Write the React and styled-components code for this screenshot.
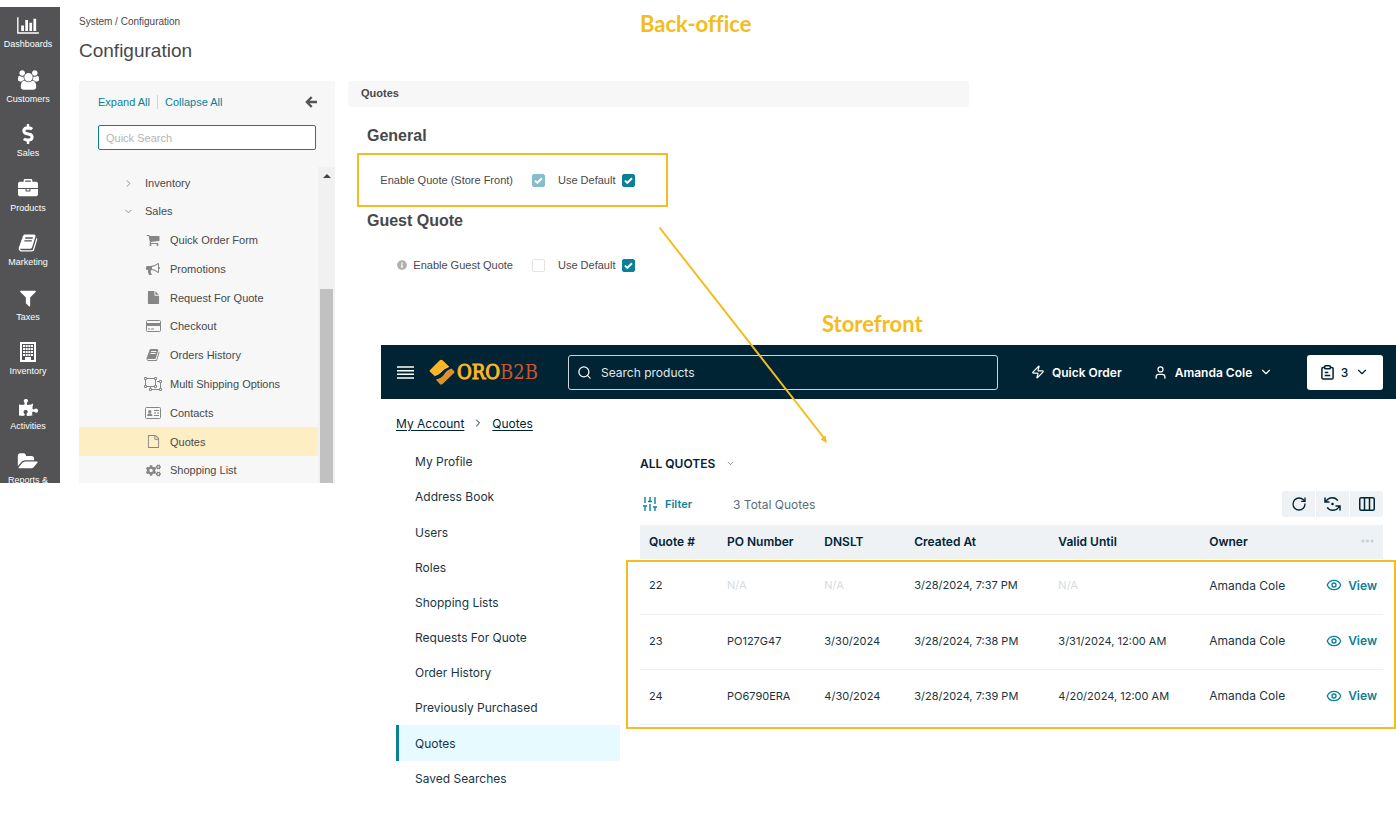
import React from 'react';
import styled, { createGlobalStyle } from 'styled-components';
import { FaDollarSign, FaPuzzlePiece, FaCogs, FaInfoCircle } from 'react-icons/fa';
import { Zap, User, ChevronDown, ChevronRight, Search, RotateCw, Eye } from 'lucide-react';

const admin = `'Liberation Sans', Arial, sans-serif`;
const store = `Inter, 'Open Sans', sans-serif`;
const amber = '#f4bc20';
const teal = '#0c7f99';
const navy = '#002434';

const GlobalStyle = createGlobalStyle`
  * { box-sizing: border-box; }
  body { margin: 0; background: #fff; font-family: ${admin}; font-size: 11px; color: #48484a; }
  button, input { font: inherit; color: inherit; }
  button { border: 0; padding: 0; background: none; cursor: pointer; }
  ul, ol { list-style: none; margin: 0; padding: 0; }
  h1, h2, h3, p { margin: 0; }
  a { color: inherit; text-decoration: none; }
  svg { display: block; flex: none; }
`;

const Page = styled.div`
  position: relative;
  display: flex;
  align-items: flex-start;
  min-height: 100vh;
`;

/* ---------- back-office navigation ---------- */
const Rail = styled.nav`
  width: 60px;
  flex: none;
  height: 476px;
  margin-top: 7px;
  padding-right: 4px;
  overflow: hidden;
  background: #535355;
`;
const RailLink = styled.a`
  display: flex;
  flex-direction: column;
  align-items: center;
  height: 55px;
  padding-top: 6px;
  color: #fff;
  font-size: 9px;
  line-height: 14px;
  white-space: nowrap;
  &:nth-child(even) { height: 54px; }
`;
const RailIcon = styled.span`
  display: flex;
  align-items: center;
  justify-content: center;
  height: 24px;
`;

const TreeColumn = styled.section`
  width: 256px;
  flex: none;
  margin-left: 19px;
`;
const Crumbs = styled.p`
  padding-top: 16px;
  font-size: 10px;
  line-height: 12px;
`;
const PageTitle = styled.h1`
  margin-top: 10px;
  font-size: 19px;
  line-height: 25px;
  font-weight: 400;
`;
const TreePanel = styled.div`
  height: 402px;
  margin-top: 18px;
  overflow: hidden;
  border-radius: 3px 3px 0 0;
  background: #f7f7f7;
`;
const TreeTools = styled.div`
  display: flex;
  align-items: center;
  padding: 14px 18px 0 19px;
  height: 28px;
`;
const TreeTool = styled.button`
  color: ${teal};
  line-height: 14px;
  & + & {
    margin-left: 7px;
    padding-left: 7px;
    border-left: 1px solid #d4d4d4;
  }
`;
const CollapseButton = styled.button`
  margin-left: auto;
  color: #555;
`;
const QuickSearch = styled.input`
  display: block;
  width: calc(100% - 38px);
  height: 25px;
  margin: 16px 19px 0;
  padding: 0 7px;
  border: 1px solid ${teal};
  border-radius: 2px;
  outline: 0;
  background: #fff;
  &::placeholder { color: #b5b5b5; opacity: 1; }
`;
const TreeScroll = styled.div`
  display: flex;
  height: 316px;
  margin-top: 17px;
`;
const TreeList = styled.ul`
  flex: 1;
  padding-top: 2px;
`;
const TreeLink = styled.a`
  display: flex;
  align-items: center;
  height: ${p => (p.$branch ? '28px' : '29px')};
  padding-left: ${p => (p.$branch ? '42px' : '64px')};
  background: ${p => (p.$active ? '#feeec4' : 'transparent')};
  li:nth-child(5n + 1) > & { height: 28px; }
`;
const TreeIcon = styled.span`
  display: flex;
  justify-content: center;
  width: ${p => (p.$branch ? '15px' : '20px')};
  margin-right: ${p => (p.$branch ? '9px' : '7px')};
  color: #868686;
`;
const ScrollTrack = styled.div`
  display: flex;
  flex-direction: column;
  align-items: center;
  width: 17px;
  background: #f1f1f1;
`;
const ScrollArrow = styled.span`
  margin: 7px 0 111px;
  border: 4px solid transparent;
  border-top: 0;
  border-bottom-color: #444;
`;
const ScrollThumb = styled.span`
  flex: 1;
  width: 13px;
  background: #c1c1c1;
`;

/* ---------- main column ---------- */
const Main = styled.main`
  flex: 1;
  min-width: 0;
  margin-left: 13px;
`;
const Caption = styled.h2`
  padding-top: ${p => p.$top};
  padding-left: ${p => p.$indent};
  color: ${amber};
  font: 700 22px/28px Lato, sans-serif;
  font-variant-ligatures: none;
`;
const Settings = styled.section`
  margin-top: 43px;
  height: 203px;
`;
const SettingsTab = styled.h3`
  width: 59.25%;
  height: 26px;
  padding-left: 13px;
  border-radius: 3px;
  background: #f7f7f7;
  font-size: 11px;
  line-height: 25px;
`;
const SettingsHeading = styled.h3`
  padding-left: 19px;
  margin-top: ${p => (p.$first ? '17px' : '2px')};
  font-size: 16px;
  line-height: 24px;
`;
const SettingRow = styled.div`
  display: flex;
  align-items: center;
  width: 311px;
  height: 54px;
  margin: 5px 0 0 9px;
  border: 2px solid ${p => (p.$marked ? amber : 'transparent')};
`;
const SettingLabel = styled.label`
  display: flex;
  align-items: center;
  justify-content: flex-end;
  gap: 6px;
  width: 154px;
  margin-right: 19px;
  line-height: 14px;
  svg { color: #b0b0b0; }
`;
const Tick = styled.input`
  appearance: none;
  flex: none;
  width: 13px;
  height: 13px;
  margin: 0;
  border: 1px solid #e3e3e3;
  border-radius: 2px;
  background: #fff center / 9px 9px no-repeat;
  &:checked {
    border-color: ${teal};
    background-color: ${teal};
    background-image: url("data:image/svg+xml,%3Csvg xmlns='http://www.w3.org/2000/svg' viewBox='0 0 9 9'%3E%3Cpath d='M1 4.6l2.3 2.3L8 2.2' fill='none' stroke='white' stroke-width='2'/%3E%3C/svg%3E");
  }
  &:disabled:checked { opacity: .5; }
`;
const DefaultLabel = styled.label`
  display: flex;
  align-items: center;
  gap: 7px;
  margin-left: 13px;
`;

/* ---------- storefront ---------- */
const Store = styled.section`
  margin: 7px 0 0 33px;
  font-family: ${store};
  font-size: 11px;
  color: ${navy};
`;
const StoreHeader = styled.header`
  display: flex;
  align-items: center;
  height: 54px;
  padding: 0 13px 0 16px;
  background: ${navy};
  color: #fff;
`;
const Logo = styled.a`
  display: flex;
  align-items: center;
  gap: 2px;
  width: 112px;
  margin: 0 27px 0 15px;
  color: #fdb725;
  font: 400 20px/24px 'DejaVu Serif Condensed', 'DejaVu Serif', serif;
  white-space: nowrap;
`;
const LogoHead = styled.span`
  -webkit-text-stroke: 1px currentColor;
`;
const LogoTail = styled.span`
  color: #c9572b;
`;
const SearchBox = styled.label`
  display: flex;
  align-items: center;
  flex: 0 1 430px;
  height: 35px;
  padding: 0 8px;
  gap: 9px;
  border: 1px solid #cdd7db;
  border-radius: 3px;
  input {
    flex: 1;
    min-width: 0;
    padding: 0;
    border: 0;
    outline: 0;
    background: none;
    font-size: 12px;
    &::placeholder { color: #e2e8ea; opacity: 1; }
  }
`;
const HeaderButton = styled.button`
  display: flex;
  align-items: center;
  gap: 7px;
  margin-left: ${p => p.$gap};
  font-size: 12px;
  font-weight: 600;
  white-space: nowrap;
`;
const ListButton = styled(HeaderButton)`
  justify-content: center;
  margin-left: auto;
  width: 76px;
  height: 35px;
  border-radius: 3px;
  background: #fff;
  color: ${navy};
  font-weight: 500;
`;
const StoreCrumbs = styled.nav`
  display: flex;
  align-items: center;
  gap: 8px;
  height: 48px;
  padding-left: 15px;
  font-size: 12px;
  a { text-decoration: underline; text-underline-offset: 2px; }
`;
const StoreBody = styled.div`
  display: flex;
  align-items: flex-start;
`;
const AccountMenu = styled.ul`
  flex: none;
  width: 224px;
  margin: -3px 20px 0 15px;
  font-size: 12px;
  color: #1b3442;
`;
const AccountLink = styled.a`
  display: flex;
  align-items: center;
  height: ${p => (p.$active ? '36px' : '35px')};
  padding-left: 16px;
  border-left: 3px solid ${p => (p.$active ? teal : 'transparent')};
  background: ${p => (p.$active ? '#e6faff' : 'transparent')};
  li:nth-child(3) > & { height: 36px; }
`;
const Quotes = styled.div`
  flex: 1;
  min-width: 0;
  padding: 6px 13px 0 0;
`;
const ViewSwitch = styled.button`
  display: flex;
  align-items: center;
  gap: 11px;
  height: 20px;
  font-size: 12px;
  font-weight: 600;
  svg { color: #667; }
`;
const GridBar = styled.div`
  display: flex;
  align-items: center;
  height: 26px;
  margin: 18px 0 8px;
`;
const FilterButton = styled.button`
  display: flex;
  align-items: center;
  gap: 8px;
  margin: 0 41px 0 3px;
  color: ${teal};
  font-weight: 600;
`;
const Total = styled.span`
  color: #5b6d78;
  font-size: 12px;
`;
const Tools = styled.div`
  display: flex;
  gap: 1px;
  margin-left: auto;
  overflow: hidden;
  border-radius: 3px;
`;
const Tool = styled.button`
  display: flex;
  align-items: center;
  justify-content: center;
  width: 33px;
  height: 26px;
  background: #eef2f5;
`;
const TableFrame = styled.div`
  position: relative;
`;
const Table = styled.table`
  width: 100%;
  table-layout: fixed;
  border-collapse: collapse;
  th, td { padding: 0 0 2px 9px; text-align: left; white-space: nowrap; }
  th { height: 34px; background: #eef2f5; font-size: 12px; font-weight: 600; }
  td { height: 55px; border-bottom: 1px solid #edf0f2; color: #1b3442; }
  td:nth-child(6), td:nth-child(7) { font-size: 12px; }
  tr > :last-child { padding-left: 0; }
  th:last-child { padding-right: 9px; color: #c6ced3; }
  th:last-child svg { margin-left: auto; }
`;
const Muted = styled.span`
  color: #d5dce0;
`;
const ViewLink = styled.a`
  display: flex;
  align-items: center;
  justify-content: flex-end;
  gap: 6px;
  padding-right: 6px;
  color: ${teal};
  font-weight: 600;
`;
const Marker = styled.div`
  position: absolute;
  inset: 35px -13px -4px -14px;
  border: 2px solid ${amber};
  pointer-events: none;
`;
const Arrow = styled.svg`
  position: absolute;
  left: 658px;
  top: 226px;
  pointer-events: none;
`;

/* ---------- drawings ---------- */
const Glyph = ({ d, w = 1792, h = 1792, size = 22 }) => (
  <svg width={Math.round(size * w / h)} height={size} viewBox={`0 0 ${w} ${h}`} fill="currentColor" aria-hidden="true"><path d={d} /></svg>
);
const bars = 'M640 896v512h-256v-512h256zm384-512v1024h-256v-1024h256zm1024 1152v128h-2048v-1536h128v1408h1920zm-640-896v768h-256v-768h256zm384-384v1152h-256v-1152h256z';
const group = 'M593 896q-162 5-265 128h-134q-82 0-138-40.5t-56-118.5q0-353 124-353 6 0 43.5 21t97.5 42.5 119 21.5q67 0 133-23-5 37-5 66 0 139 81 256zm1071 637q0 120-73 189.5t-194 69.5h-874q-121 0-194-69.5t-73-189.5q0-53 3.5-103.5t14-109 26.5-108.5 43-97.5 62-81 85.5-53.5 111.5-20q10 0 43 21.5t73 48 107 48 135 21.5 135-21.5 107-48 73-48 43-21.5q61 0 111.5 20t85.5 53.5 62 81 43 97.5 26.5 108.5 14 109 3.5 103.5zm-1024-1277q0 106-75 181t-181 75-181-75-75-181 75-181 181-75 181 75 75 181zm704 384q0 159-112.5 271.5t-271.5 112.5-271.5-112.5-112.5-271.5 112.5-271.5 271.5-112.5 271.5 112.5 112.5 271.5zm576 225q0 78-56 118.5t-138 40.5h-134q-103-123-265-128 81-117 81-256 0-29-5-66 66 23 133 23 59 0 119-21.5t97.5-42.5 43.5-21q124 0 124 353zm-128-609q0 106-75 181t-181 75-181-75-75-181 75-181 181-75 181 75 75 181z';
const briefcase = 'M640 256h512v-128h-512v128zm1152 640v480q0 66-47 113t-113 47h-1472q-66 0-113-47t-47-113v-480h672v160q0 26 19 45t45 19h320q26 0 45-19t19-45v-160h672zm-768 0v128h-256v-128h256zm768-480v384h-1792v-384q0-66 47-113t113-47h352v-160q0-40 28-68t68-28h576q40 0 68 28t28 68v160h352q66 0 113 47t47 113z';
const book = 'M1703 478q40 57 18 129l-275 906q-19 64-76.5 107.5t-122.5 43.5h-923q-77 0-148.5-53.5t-99.5-131.5q-24-67-2-127 0-4 3-27t4-37q1-8-3-21.5t-3-19.5q2-11 8-21t16.5-23.5 16.5-23.5q23-38 45-91.5t30-91.5q3-10 .5-30t-.5-28q3-11 17-28t17-23q21-36 42-92t25-90q1-9-2.5-32t.5-28q4-13 22-30.5t22-22.5q19-26 42.5-84.5t27.5-96.5q1-8-3-25.5t-2-26.5q2-8 9-18t18-23 17-21q8-12 16.5-30.5t15-35 16-36 19.5-32 26.5-23.5 36-11.5 47.5 5.5l-1 3q38-9 51-9h761q74 0 114 56t18 130l-274 906q-36 119-71.5 153.5t-128.5 34.5h-869q-27 0-38 15-11 16-1 43 24 70 144 70h923q29 0 56-15.5t35-41.5l300-987q7-22 5-57 38 15 59 43zm-1064 2q-4 13 2 22.5t20 9.5h608q13 0 25.5-9.5t16.5-22.5l21-64q4-13-2-22.5t-20-9.5h-608q-13 0-25.5 9.5t-16.5 22.5zm-83 256q-4 13 2 22.5t20 9.5h608q13 0 25.5-9.5t16.5-22.5l21-64q4-13-2-22.5t-20-9.5h-608q-13 0-25.5 9.5t-16.5 22.5z';
const funnel = 'M1595 295q17 41-14 70l-493 493v742q0 42-39 59-13 5-25 5-27 0-45-19l-256-256q-19-19-19-45v-486l-493-493q-31-29-14-70 17-39 59-39h1280q42 0 59 39z';
const folder = 'M1943 952q0 31-31 66l-336 396q-43 51-120.5 86.5t-143.5 35.5h-1088q-34 0-60.5-13t-26.5-43q0-31 31-66l336-396q43-51 120.5-86.5t143.5-35.5h1088q34 0 60.5 13t26.5 43zm-343-344v160h-832q-94 0-197 47.5t-164 119.5l-337 396-5 6q0-4-.5-12.5t-.5-12.5v-960q0-92 66-158t158-66h320q92 0 158 66t66 158v32h544q92 0 158 66t66 158z';
const cart = 'M704 1536q0 52-38 90t-90 38-90-38-38-90 38-90 90-38 90 38 38 90zm896 0q0 52-38 90t-90 38-90-38-38-90 38-90 90-38 90 38 38 90zm128-1088v512q0 24-16.5 42.5t-40.5 21.5l-1044 122q13 60 13 70 0 16-24 64h920q26 0 45 19t19 45-19 45-45 19h-1024q-26 0-45-19t-19-45q0-11 8-31.5t16-36 21.5-40 15.5-29.5l-177-823h-204q-26 0-45-19t-19-45 19-45 45-19h256q16 0 28.5 6.5t19.5 15.5 13 24.5 8 26 5.5 29.5 4.5 26h1201q26 0 45 19t19 45z';
const horn = 'M1664 640q53 0 90.5 37.5t37.5 90.5-37.5 90.5-90.5 37.5v384q0 52-38 90t-90 38q-417-347-812-380-58 19-91 66t-31 100.5 40 92.5q-20 33-23 65.5t6 58 33.5 55 48 50 61.5 50.5q-29 58-111.5 83t-168.5 11.5-132-55.5q-7-23-29.5-87.5t-32-94.5-23-89-15-101 3.5-98.5 22-110.5h-122q-66 0-113-47t-47-113v-192q0-66 47-113t113-47h480q435 0 896-384 52 0 90 38t38 90v384zm-128 604v-954q-394 302-768 343v270q377 42 768 341z';
const file = 'M1152 512v-472q22 14 36 28l408 408q14 14 28 36h-472zm-128 32q0 40 28 68t68 28h544v1056q0 40-28 68t-68 28h-1344q-40 0-68-28t-28-68v-1600q0-40 28-68t68-28h800v544z';
const fileOutline = 'M1596 380q28 28 48 76t20 88v1152q0 40-28 68t-68 28h-1344q-40 0-68-28t-28-68v-1600q0-40 28-68t68-28h896q40 0 88 20t76 48zm-444-244v376h376q-10-29-22-41l-313-313q-12-12-41-22zm384 1528v-1024h-416q-40 0-68-28t-28-68v-416h-768v1536h1280z';

const BackIcon = () => (
  <svg width="12" height="12" viewBox="0 0 12 12" fill="none" stroke="currentColor" strokeWidth="2.400" aria-hidden="true">
    <path d="M6.700 1L1.900 6l4.800 5M2.200 6H12" />
  </svg>
);
const BuildingIcon = () => (
  <svg width="16" height="20" viewBox="0 0 16 20" aria-hidden="true">
    <path d="M0 0h16v20H0z" fill="#fff" />
    <path d="M2 2h12v16h-3v-3H5v3H2z" fill="#535355" />
    <path d="M3 4h10M3 7h10M3 10h10M3 13h10" stroke="#fff" strokeWidth="2" strokeDasharray="2 .67" />
  </svg>
);
const CardIcon = () => (
  <svg width="15" height="12" viewBox="0 0 15 12" aria-hidden="true">
    <rect x=".5" y=".5" width="14" height="11" rx="1" fill="none" stroke="#868686" />
    <path d="M1 3h13v3H1zM2 8.500h2v1H2zM5 8.500h3v1H5z" fill="#868686" />
  </svg>
);
const ContactIcon = () => (
  <svg width="16" height="12" viewBox="0 0 16 12" fill="#868686" aria-hidden="true">
    <rect x=".5" y=".5" width="15" height="11" rx="1" fill="none" stroke="#868686" />
    <circle cx="4.800" cy="4.600" r="1.600" />
    <path d="M2.200 9c0-2 1-2.800 2.600-2.800S7.400 7 7.400 9zM9 3h5v1H9zM9 5.500h2v1H9zM12 5.500h2v1h-2zM9 8h5v1H9z" />
  </svg>
);
const UngroupIcon = () => (
  <svg width="18" height="14" viewBox="0 0 18 14" fill="none" stroke="#868686" aria-hidden="true">
    <path d="M3 1.500h7M1.500 3v5M3 9.500h7M11.500 3v5M13 4.500h2M16.500 6v5M8 12.500h7M6.500 10v1" />
    <path d="M.5.5h2v2h-2zM10.500.5h2v2h-2zM.5 8.500h2v2h-2zM10.500 8.500h2v2h-2zM15.500 3.500h2v2h-2zM15.500 11.500h2v2h-2zM5.500 11.500h2v2h-2z" />
  </svg>
);
const LogoMark = () => (
  <svg width="26" height="26" viewBox="0 0 26 26" aria-hidden="true">
    <path d="M10.800 1.300Q12.200 0 13.600 1.300L20 7.500Q15 9.500 12.500 12.500Q10 15.500 5.300 16.800L1 12.800Q0 12 1 11z" fill="#fdb725" />
    <path d="M20 7.500Q15 9.500 12.500 12.500Q10 15.500 5.300 16.800" fill="none" stroke="#ffe29a" strokeWidth=".8" />
    <path d="M22.500 9.500L25 12Q26 13 25 14L13.600 25Q12.200 26 10.800 25L6.800 20.500Q12.500 19.500 15 15.500Q17.500 11 22.500 9.500z" fill="#dd9229" />
  </svg>
);
const MenuIcon = () => (
  <svg width="17" height="13" viewBox="0 0 17 13" aria-hidden="true">
    <path d="M0 1h17M0 4.670h17M0 8.330h17M0 12h17" stroke="#fff" strokeWidth="1.500" />
  </svg>
);
const ClipboardIcon = () => (
  <svg width="13" height="15" viewBox="0 0 13 15" fill="none" stroke="currentColor" strokeWidth="1.500" strokeLinejoin="round" aria-hidden="true">
    <path d="M3.500 2.500H2.200Q.9 2.500.9 3.800v9Q.9 14.100 2.200 14.100h8.600q1.300 0 1.300-1.300v-9q0-1.300-1.300-1.300H9.500" />
    <rect x="3.700" y=".8" width="5.600" height="3" rx=".8" />
    <path d="M3.700 7.500h3.600M3.700 10.500h5.600" />
  </svg>
);
const SlidersIcon = () => (
  <svg width="14" height="14" viewBox="0 0 14 14" fill="none" stroke="currentColor" strokeWidth="1.400" aria-hidden="true">
    <path d="M2 0v6M2 9v5M0 9h4M7 0v4M7 7v7M5 4.500h4M12 0v7M12 10v4M10 10h4" />
  </svg>
);
const ResetIcon = () => (
  <svg width="17" height="16" viewBox="0 0 17 16" fill="none" stroke="currentColor" strokeWidth="1.500" aria-hidden="true">
    <path d="M1 1.500v4.500h4.500M1.500 6C3 3 5.500 1.700 8.500 1.700c2.300 0 4 1 5.300 3M16 14.500V10h-4.500M15.500 10c-1.500 3-4 4.300-7 4.300-2.300 0-4-1-5.300-3" />
    <circle cx="8.500" cy="8" r="1.300" fill="currentColor" stroke="none" />
  </svg>
);
const ColumnsIcon = () => (
  <svg width="16" height="14" viewBox="0 0 16 14" fill="none" stroke="currentColor" strokeWidth="1.500" aria-hidden="true">
    <rect x=".75" y=".75" width="14.500" height="12.500" rx="1.500" />
    <path d="M5.500 1v12M10.500 1v12" />
  </svg>
);
const DotsIcon = () => (
  <svg width="13" height="4" viewBox="0 0 13 4" fill="currentColor" aria-hidden="true">
    <circle cx="2" cy="2" r="1.500" /><circle cx="6.500" cy="2" r="1.500" /><circle cx="11" cy="2" r="1.500" />
  </svg>
);

/* ---------- data ---------- */
const railItems = [
  ['Dashboards', <Glyph d={bars} w={2048} size={19} />],
  ['Customers', <Glyph d={group} w={1920} size={20} />],
  ['Sales', <FaDollarSign size={20} />],
  ['Products', <Glyph d={briefcase} size={20} />],
  ['Marketing', <Glyph d={book} size={20} />],
  ['Taxes', <Glyph d={funnel} size={20} />],
  ['Inventory', <BuildingIcon />],
  ['Activities', <FaPuzzlePiece size={19} />],
  ['Reports &', <Glyph d={folder} w={2048} size={19} />],
];
const treeItems = [
  ['Quick Order Form', <Glyph d={cart} size={14} />],
  ['Promotions', <Glyph d={horn} size={14} />],
  ['Request For Quote', <Glyph d={file} size={13} />],
  ['Checkout', <CardIcon />],
  ['Orders History', <Glyph d={book} size={14} />],
  ['Multi Shipping Options', <UngroupIcon />],
  ['Contacts', <ContactIcon />],
  ['Quotes', <Glyph d={fileOutline} size={13} />],
  ['Shopping List', <FaCogs size={15} />],
];
const accountItems = ['My Profile', 'Address Book', 'Users', 'Roles', 'Shopping Lists', 'Requests For Quote', 'Order History', 'Previously Purchased', 'Quotes', 'Saved Searches'];
const columns = [['Quote #', '10.5%'], ['PO Number', '13.1%'], ['DNSLT', '12.1%'], ['Created At', '19.4%'], ['Valid Until', '20.3%'], ['Owner', '15%']];
const quotes = [
  ['22', null, null, '3/28/2024, 7:37 PM', null, 'Amanda Cole'],
  ['23', 'PO127G47', '3/30/2024', '3/28/2024, 7:38 PM', '3/31/2024, 12:00 AM', 'Amanda Cole'],
  ['24', 'PO6790ERA', '4/30/2024', '3/28/2024, 7:39 PM', '4/20/2024, 12:00 AM', 'Amanda Cole'],
];

const Setting = ({ id, label, marked, info, ...tick }) => (
  <SettingRow $marked={marked}>
    <SettingLabel htmlFor={id}>{info && <FaInfoCircle size={10} />}{label}</SettingLabel>
    <Tick id={id} type="checkbox" disabled {...tick} />
    <DefaultLabel>Use Default <Tick type="checkbox" defaultChecked /></DefaultLabel>
  </SettingRow>
);

export default function App() {
  return (
    <Page>
      <GlobalStyle />
      <Rail aria-label="Main menu">
        {railItems.map(([name, icon]) => (
          <RailLink href="#" key={name}><RailIcon>{icon}</RailIcon>{name}</RailLink>
        ))}
      </Rail>

      <TreeColumn>
        <Crumbs>System / Configuration</Crumbs>
        <PageTitle>Configuration</PageTitle>
        <TreePanel>
          <TreeTools>
            <TreeTool>Expand All</TreeTool>
            <TreeTool>Collapse All</TreeTool>
            <CollapseButton aria-label="Collapse panel"><BackIcon /></CollapseButton>
          </TreeTools>
          <QuickSearch placeholder="Quick Search" aria-label="Quick Search" autoFocus />
          <TreeScroll>
            <TreeList>
              <li><TreeLink href="#" $branch><TreeIcon $branch><ChevronRight size={11} /></TreeIcon>Inventory</TreeLink></li>
              <li><TreeLink href="#" $branch><TreeIcon $branch><ChevronDown size={11} /></TreeIcon>Sales</TreeLink></li>
              {treeItems.map(([name, icon]) => (
                <li key={name}><TreeLink href="#" $active={name === 'Quotes'}><TreeIcon>{icon}</TreeIcon>{name}</TreeLink></li>
              ))}
            </TreeList>
            <ScrollTrack><ScrollArrow /><ScrollThumb /></ScrollTrack>
          </TreeScroll>
        </TreePanel>
      </TreeColumn>

      <Main>
        <Caption $top="10px" $indent="292px">Back-office</Caption>
        <Settings>
          <SettingsTab>Quotes</SettingsTab>
          <SettingsHeading $first>General</SettingsHeading>
          <Setting id="quote" label="Enable Quote (Store Front)" marked defaultChecked />
          <SettingsHeading>Guest Quote</SettingsHeading>
          <Setting id="guest" label="Enable Guest Quote" info />
        </Settings>
        <Caption $top="26px" $indent="474px">Storefront</Caption>

        <Store>
          <StoreHeader>
            <HeaderButton aria-label="Menu"><MenuIcon /></HeaderButton>
            <Logo href="#"><LogoMark /><span><LogoHead>ORO</LogoHead><LogoTail>B2B</LogoTail></span></Logo>
            <SearchBox>
              <Search size={15} strokeWidth={2} />
              <input type="search" placeholder="Search products" aria-label="Search products" />
            </SearchBox>
            <HeaderButton $gap="33px"><Zap size={14} />Quick Order</HeaderButton>
            <HeaderButton $gap="31px"><User size={15} />Amanda Cole<ChevronDown size={14} /></HeaderButton>
            <ListButton><ClipboardIcon />3<ChevronDown size={14} /></ListButton>
          </StoreHeader>
          <StoreCrumbs aria-label="Breadcrumb">
            <a href="#">My Account</a><ChevronRight size={12} /><a href="#">Quotes</a>
          </StoreCrumbs>
          <StoreBody>
            <AccountMenu>
              {accountItems.map(name => (
                <li key={name}><AccountLink href="#" $active={name === 'Quotes'}>{name}</AccountLink></li>
              ))}
            </AccountMenu>
            <Quotes>
              <ViewSwitch>ALL QUOTES<ChevronDown size={9} /></ViewSwitch>
              <GridBar>
                <FilterButton><SlidersIcon />Filter</FilterButton>
                <Total>3 Total Quotes</Total>
                <Tools>
                  <Tool aria-label="Refresh"><RotateCw size={16} /></Tool>
                  <Tool aria-label="Reset"><ResetIcon /></Tool>
                  <Tool aria-label="Columns"><ColumnsIcon /></Tool>
                </Tools>
              </GridBar>
              <TableFrame>
                <Table>
                  <colgroup>{columns.map(([name, width]) => <col key={name} width={width} />)}<col /></colgroup>
                  <thead><tr>{columns.map(([name]) => <th key={name}>{name}</th>)}<th aria-label="Actions"><DotsIcon /></th></tr></thead>
                  <tbody>
                    {quotes.map(row => (
                      <tr key={row[0]}>
                        {row.map((cell, i) => <td key={i}>{cell || <Muted>N/A</Muted>}</td>)}
                        <td><ViewLink href="#"><Eye size={16} />View</ViewLink></td>
                      </tr>
                    ))}
                  </tbody>
                </Table>
                <Marker />
              </TableFrame>
            </Quotes>
          </StoreBody>
        </Store>
      </Main>

      <Arrow width="172" height="220" viewBox="0 0 172 220" aria-hidden="true">
        <path d="M1.500 1.500L166 212" stroke={amber} strokeWidth="2" />
        <path d="M169 217l-1.500-7.500-5 4z" fill={amber} />
      </Arrow>
    </Page>
  );
}
